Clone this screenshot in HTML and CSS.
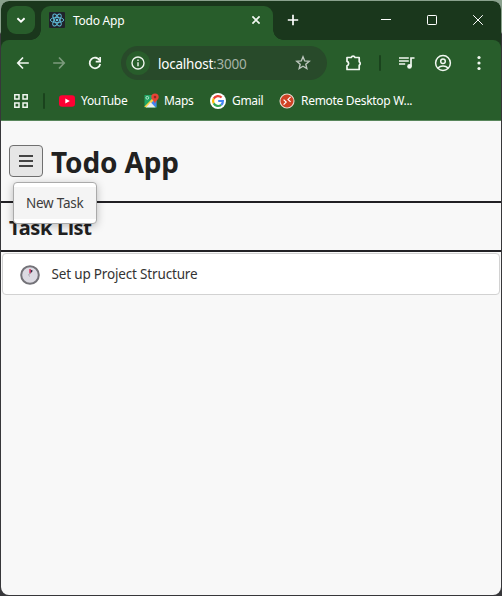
FILE: index.html
```html
<!DOCTYPE html>
<html lang="en">
<head>
<meta charset="utf-8">
<title>Todo App</title>
<link rel="stylesheet" href="styles.css">
</head>
<body>
<div class="window">
  <header class="titlebar">
    <button class="tab-search" aria-label="Search tabs"><svg width="28" height="28" viewBox="0 0 28 28"><path d="M10.4 12.3 14 15.7l3.6-3.4" fill="none" stroke="#fff" stroke-width="1.9"/></svg></button>
    <div class="tab">
      <svg class="favicon" width="16" height="16" viewBox="0 0 16 16"><rect width="16" height="16" rx="1" fill="#20232a"/><g fill="none" stroke="#61bfdc" stroke-width=".9"><ellipse cx="8" cy="8" rx="6.7" ry="2.6"/><ellipse cx="8" cy="8" rx="6.7" ry="2.6" transform="rotate(60 8 8)"/><ellipse cx="8" cy="8" rx="6.7" ry="2.6" transform="rotate(120 8 8)"/></g><circle cx="8" cy="8" r="1.3" fill="#61bfdc"/></svg>
      <span class="tab-title">Todo App</span>
      <svg class="tab-close" width="10" height="10" viewBox="0 0 10 10"><path d="m1.4 1.4 7.2 7.2m0-7.2L1.4 8.6" stroke="#f1f7f1" stroke-width="1.7"/></svg>
    </div>
    <svg class="new-tab" width="12" height="12" viewBox="0 0 12 12"><path d="M6 .8v10.4M.8 6h10.4" stroke="#fff" stroke-width="1.7"/></svg>
    <div class="controls">
      <svg width="10" height="12" viewBox="0 0 10 12"><path d="M0 5.5h10" stroke="#fff"/></svg>
      <svg width="10" height="12" viewBox="0 0 10 12"><rect x=".5" y="1.5" width="9" height="9" rx=".7" fill="none" stroke="#fff"/></svg>
      <svg width="10" height="12" viewBox="0 0 10 12"><path d="m.2 1.2 9.6 9.6m0-9.6-9.6 9.6" stroke="#fff"/></svg>
    </div>
  </header>
  <section class="chrome">
    <div class="toolbar">
      <svg class="back" width="14" height="14" viewBox="0 0 14 14"><path d="M12.8 7H2.3M7 1.5 1.8 7 7 12.5" fill="none" stroke="#f1f7f1" stroke-width="1.7"/></svg>
      <svg class="forward" width="14" height="14" viewBox="0 0 14 14"><path d="M1.2 7h10.5M7 1.5 12.2 7 7 12.5" fill="none" stroke="#7c9b7d" stroke-width="1.7"/></svg>
      <svg class="reload" width="14" height="14" viewBox="0 0 14 14"><path d="M11.8 4.7A5.3 5.3 0 1 0 12.2 8" fill="none" stroke="#f1f7f1" stroke-width="1.8"/><path d="M13 1v5.4H7.7V4.8h3.6V1z" fill="#f1f7f1"/></svg>
      <div class="address">
        <span class="site-info"><svg width="14" height="14" viewBox="0 0 14 14"><circle cx="7" cy="7" r="6" fill="none" stroke="#edf4ed" stroke-width="1.4"/><path d="M7 6.2v4M7 3.6v1.5" stroke="#edf4ed" stroke-width="1.4"/></svg></span>
        <span class="url">localhost<span class="port">:3000</span></span>
        <svg class="star" width="16" height="16" viewBox="0 0 16 16"><path d="m8 1.8 1.7 4.1 4.5.4-3.4 2.9 1 4.3L8 11.2l-3.8 2.3 1-4.3-3.4-2.9 4.5-.4z" fill="none" stroke="#bbc5bc" stroke-width="1.4"/></svg>
      </div>
      <svg class="extensions" width="18" height="18" viewBox="0 0 18 18"><path d="M2 3.5h4.2a2 2 0 0 1 3.8 0h4.2v4.2a2 2 0 0 1 0 3.5v4.3H2v-3.7a2.3 2.3 0 0 0 0-4.4z" fill="none" stroke="#f1f7f1" stroke-width="1.7" stroke-linejoin="round"/></svg>
      <span class="divider"></span>
      <svg class="media" width="16" height="14" viewBox="0 0 16 14"><path d="M0 2h9.8M0 5h9.8M0 8h6.2" stroke="#f1f7f1" stroke-width="1.5"/><path d="M15.5 2H12v8.5" fill="none" stroke="#f1f7f1" stroke-width="1.7"/><circle cx="10.5" cy="10.4" r="2.3" fill="#f1f7f1"/></svg>
      <svg class="profile" width="18" height="18" viewBox="0 0 18 18"><g fill="none" stroke="#f1f7f1" stroke-width="1.5"><circle cx="9" cy="9" r="7.4"/><circle cx="9" cy="7.3" r="2.3"/><path d="M3.9 14c2.8-2.8 7.4-2.8 10.2 0"/></g></svg>
      <svg class="more" width="4" height="16" viewBox="0 0 4 16" fill="#f1f7f1"><circle cx="2" cy="2.5" r="1.6"/><circle cx="2" cy="8" r="1.6"/><circle cx="2" cy="13.5" r="1.6"/></svg>
    </div>
    <nav class="bookmarks">
      <svg class="apps" width="14" height="14" viewBox="0 0 14 14"><g fill="none" stroke="#f1f7f1" stroke-width="1.5"><path d="M.8.8h4.2v4.2H.8zM9 .8h4.2v4.2H9zM.8 9h4.2v4.2H.8zM9 9h4.2v4.2H9z"/></g></svg>
      <span class="divider"></span>
      <a class="bookmark youtube"><svg width="16" height="16" viewBox="0 0 16 16"><rect y="2.3" width="16" height="11.4" rx="3" fill="#ff0033"/><path d="m6.3 5.5 4.5 2.5-4.5 2.5z" fill="#fff"/></svg><span>YouTube</span></a>
      <a class="bookmark maps"><svg width="16" height="16" viewBox="0 0 16 16"><path d="M1.5 2h12v12.5h-12z" fill="#1fa463"/><path d="M6.5 9.5 13.5 3v11.5z" fill="#4285f4"/><path d="m1.2 13.8 10-10 1.8 1.5-9.3 9.2z" fill="#f7d047"/><path d="m3 14.5 4.7-5.3 5 5.3z" fill="#eceff1"/><circle cx="4.3" cy="4.8" r="1.4" fill="none" stroke="#d9f2e3" stroke-width=".8"/><path d="M12 .4a3.7 3.7 0 0 0-3.7 3.7c0 2.5 3.1 3.7 3.7 7 .6-3.3 3.7-4.5 3.7-7A3.7 3.7 0 0 0 12 .4" fill="#ea4335"/><circle cx="12" cy="4.1" r="1.3" fill="#8e2c24"/></svg><span>Maps</span></a>
      <a class="bookmark gmail"><svg width="16" height="16" viewBox="0 0 16 16"><circle cx="8" cy="8" r="8" fill="#fff"/><g fill="none" stroke-width="2.2"><path d="M11.6 4.5A5 5 0 0 0 3.7 5.6" stroke="#ea4335"/><path d="M3.7 5.6a5 5 0 0 0 0 4.8" stroke="#fbbc05"/><path d="M3.7 10.4a5 5 0 0 0 7.5 1.5" stroke="#34a853"/><path d="M11.2 11.9A5 5 0 0 0 12.9 8H8.2" stroke="#4285f4"/></g></svg><span>Gmail</span></a>
      <a class="bookmark remote"><svg width="16" height="16" viewBox="0 0 16 16"><circle cx="8" cy="8" r="7" fill="#d04225" stroke="#e8d8cd" stroke-width="1.1"/><path d="m4.6 6.6 2.6 2.5-2.6 2.6M11.6 3.8 9 6.4l2.6 2.5" fill="none" stroke="#fff" stroke-width="1.2"/></svg><span>Remote Desktop W...</span></a>
    </nav>
  </section>
  <main class="page">
    <header class="app-header">
      <div class="menu">
        <button class="menu-button" aria-label="Menu"><svg width="14" height="12" viewBox="0 0 14 12"><path d="M0 1h14M0 6h14M0 11h14" stroke="#444" stroke-width="2"/></svg></button>
        <div class="dropdown"><div class="dropdown-item"><span>New Task</span></div></div>
      </div>
      <h1>Todo App</h1>
    </header>
    <h2>Task List</h2>
    <div class="task">
      <svg width="20" height="20" viewBox="0 0 20 20"><circle cx="10" cy="10" r="8.8" fill="#dcdae2" stroke="#737278" stroke-width="2"/><path d="M10.3 8.7V4.5l2.6 1.2z" fill="#25233d"/><path d="M9.3 3.9h1.4v4.4H9.3z" fill="#e52d5d"/><path d="m10 7.8-1.4 2.4 1.3 1.2" fill="none" stroke="#a3a0ab"/></svg>
      <span>Set up Project Structure</span>
    </div>
  </main>
</div>
</body>
</html>
```
FILE: styles.css
```css
* { box-sizing: border-box; }
body {
  margin: 0;
  height: 596px;
  padding: 1px;
  overflow: hidden;
  background: linear-gradient(#8aa18d 0 32px, #37373a 34px 100%);
  font-family: "Noto Sans", sans-serif;
  color: #212121;
}
svg { display: block; flex: none; }
button { padding: 0; border: 0; font: inherit; }
.window {
  width: 500px;
  height: 594px;
  overflow: hidden;
  border-radius: 8px;
  background: #f8f8f8;
}
.titlebar {
  display: flex;
  height: 47px;
  padding: 5px 0 0 6px;
  background: #1a371c;
  color: #fff;
}
.tab-search { width: 28px; height: 28px; border-radius: 9px; background: #285d2b; }
.tab {
  position: relative;
  display: flex;
  align-items: center;
  width: 232px;
  height: 34px;
  margin-left: 6px;
  padding: 0 12px 6px 8px;
  border-radius: 9px 9px 0 0;
  background: #285d2b;
}
.tab::before, .tab::after {
  content: "";
  position: absolute;
  bottom: 0;
  width: 10px;
  height: 10px;
}
.tab::before { left: -10px; background: radial-gradient(circle at 0 0, transparent 9.5px, #285d2b 10px); }
.tab::after { right: -10px; background: radial-gradient(circle at 100% 0, transparent 9.5px, #285d2b 10px); }
.tab-title { margin: 1px 0 0 8px; font-size: 12px; line-height: 16px; letter-spacing: -.25px; }
.tab-close { margin-left: auto; }
.new-tab { margin: 8px 0 0 14px; }
.controls { display: flex; gap: 36px; margin: 8px 0 0 82px; }
.chrome {
  position: relative;
  height: 81px;
  margin-top: -8px;
  border-bottom: 1px solid #58865b;
  border-radius: 8px 8px 0 0;
  background: #285d2b;
  color: #fff;
}
.toolbar { display: flex; align-items: center; height: 46px; padding-left: 15px; }
.forward { margin-left: 22px; }
.reload { margin-left: 22px; }
.address {
  display: flex;
  align-items: center;
  width: 206px;
  height: 34px;
  margin-left: 19px;
  padding: 0 16px 0 5px;
  border-radius: 17px;
  background: #284a2a;
}
.site-info {
  display: flex;
  align-items: center;
  justify-content: center;
  width: 24px;
  height: 24px;
  border-radius: 50%;
  background: #285d2b;
}
.url { margin: 1px 0 0 8px; font-size: 13.5px; line-height: 20px; letter-spacing: -.22px; }
.port { color: #a6b3a7; }
.star { margin-left: auto; }
.extensions { margin-left: 18px; }
.divider { width: 2px; height: 16px; border-radius: 1px; background: #1a431d; }
.toolbar .divider { margin-left: 16px; }
.media { margin-left: 18px; }
.profile { margin-left: 19px; }
.more { margin-left: 25px; }
.bookmarks { display: flex; align-items: center; height: 30px; padding-left: 13px; }
.bookmarks .apps, .bookmark svg { margin-top: -1px; }
.bookmarks .divider { margin-left: 15px; }
.bookmark {
  display: flex;
  align-items: center;
  gap: 6px;
  margin-left: 14px;
  font-size: 12px;
  line-height: 16px;
  white-space: nowrap;
}
.bookmark span { margin-top: -1px; letter-spacing: -.3px; }
.youtube { width: 70px; letter-spacing: -.4px; }
.maps { width: 53px; gap: 5px; }
.gmail { width: 55px; }
.app-header {
  display: flex;
  height: 82px;
  padding: 24px 8px 0;
  border-bottom: 2px solid #212024;
}
.menu { position: relative; }
.menu-button {
  display: flex;
  align-items: center;
  justify-content: center;
  width: 34px;
  height: 32px;
  border: 1px solid #707070;
  border-radius: 4px;
  background: #e6e6e6;
}
.dropdown {
  position: absolute;
  top: 37px;
  left: 4px;
  width: 84px;
  height: 42px;
  padding: 4px 0;
  border: 1px solid #aaa;
  border-radius: 4px;
  background: #fff;
  box-shadow: 0 2px 8px rgb(0 0 0 / 25%);
}
.dropdown-item {
  height: 32px;
  padding: 6px 0 0 12px;
  background: #f4f4f4;
  color: #3c3c3c;
  font-size: 13.5px;
  line-height: 20px;
  letter-spacing: -.25px;
  white-space: nowrap;
}
h1 { margin: -2px 0 0 8px; font-size: 28px; line-height: 38px; letter-spacing: -.15px; }
h2 {
  height: 49px;
  margin: 0;
  padding: 12px 8px 0;
  border-bottom: 2px solid #212024;
  font-size: 20px;
  line-height: 26px;
  letter-spacing: -.3px;
}
.task {
  display: flex;
  align-items: center;
  height: 42px;
  margin: 1px;
  padding-left: 17px;
  border: 1px solid #d2d2d2;
  border-radius: 4px;
  background: #fff;
  color: #333;
  font-size: 13.5px;
}
.task svg { margin-top: 1px; }
.task span { margin-left: 11.5px; letter-spacing: -.17px; }
```
